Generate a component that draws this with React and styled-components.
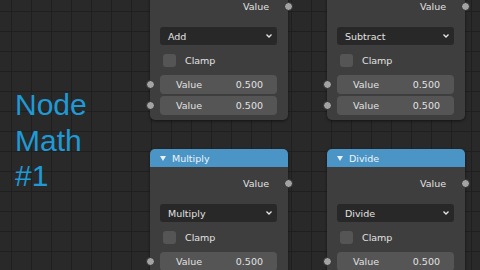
import React from "react";
import styled, { createGlobalStyle } from "styled-components";

const GlobalStyle = createGlobalStyle`
  html, body {
    margin: 0;
    padding: 0;
    background: #292929;
  }
  #root {
    width: 480px;
    height: 270px;
  }
`;

// node editor canvas with its grid
const Canvas = styled.div`
  position: relative;
  width: 480px;
  height: 270px;
  overflow: hidden;
  background-color: #292929;
  background-image:
    linear-gradient(to right, #1f1f1f 1px, transparent 1px),
    linear-gradient(to bottom, #1f1f1f 1px, transparent 1px);
  background-size: 20px 20px;
  background-position: 11px 11px;
  font-family: "DejaVu Sans", "Liberation Sans", sans-serif;
`;

const Title = styled.div`
  position: absolute;
  left: 15px;
  top: 87px;
  font-family: "Liberation Sans", Arial, sans-serif;
  font-size: 30px;
  line-height: 35.5px;
  color: #1f9ad6;
`;

const NodeBox = styled.div`
  position: absolute;
  left: ${(p) => p.$x}px;
  top: ${(p) => p.$y}px;
  width: 138px;
  background: #3e3e3e;
  border-radius: 5px;
  box-shadow: 0 1px 3px rgba(0, 0, 0, 0.55);
  color: #e2e2e2;
  font-size: 9.5px;
`;

const Header = styled.div`
  height: 18px;
  display: flex;
  align-items: center;
  gap: 6px;
  padding-left: 10px;
  background: #4a94c6;
  border-radius: 5px 5px 0 0;
  color: #eef4f8;
`;

const Arrow = styled.span`
  width: 0;
  height: 0;
  border-left: 3px solid transparent;
  border-right: 3px solid transparent;
  border-top: 5px solid #e8f0f6;
  margin-top: 1px;
`;

const Body = styled.div`
  display: flex;
  flex-direction: column;
  padding: 6px 11px 5px 10px;
`;

const OutputRow = styled.div`
  position: relative;
  height: 20px;
  display: flex;
  align-items: center;
  justify-content: flex-end;
  padding-right: 8px;
`;

const Socket = styled.span`
  position: absolute;
  top: 50%;
  width: 7px;
  height: 7px;
  margin-top: -4.5px;
  border: 1px solid #2b2b2b;
  border-radius: 50%;
  background: #a3a3a3;
  ${(p) => (p.$side === "out" ? "right: -15.5px;" : "left: -14.5px;")}
`;

const Dropdown = styled.div`
  margin-top: 11px;
  height: 18px;
  display: flex;
  align-items: center;
  justify-content: space-between;
  padding: 0 4px 0 8px;
  background: #282828;
  border-radius: 3px;
`;

const ClampRow = styled.div`
  margin-top: 6px;
  height: 18px;
  display: flex;
  align-items: center;
  padding-left: 3px;
  gap: 9px;
`;

const Check = styled.span`
  width: 13px;
  height: 13px;
  border-radius: 3px;
  background: #555555;
`;

const Field = styled.div`
  position: relative;
  margin-top: ${(p) => p.$gap}px;
  height: 19px;
  display: flex;
  align-items: center;
  justify-content: space-between;
  padding: 0 14px 0 16px;
  background: #555555;
  border-radius: 4px;
`;

function Chevron() {
  return (
    <svg width="8" height="6" viewBox="0 0 8 6">
      <path d="M1.5 1.5 L4 4 L6.5 1.5" fill="none" stroke="#e6e6e6" strokeWidth="1.3" />
    </svg>
  );
}

function MathNode({ x, y, title, op }) {
  return (
    <NodeBox $x={x} $y={y}>
      <Header>
        <Arrow />
        {title}
      </Header>
      <Body>
        <OutputRow>
          Value
          <Socket $side="out" />
        </OutputRow>
        <Dropdown>
          {op}
          <Chevron />
        </Dropdown>
        <ClampRow>
          <Check />
          Clamp
        </ClampRow>
        <Field $gap={6}>
          <span>Value</span>
          <span>0.500</span>
          <Socket $side="in" />
        </Field>
        <Field $gap={2}>
          <span>Value</span>
          <span>0.500</span>
          <Socket $side="in" />
        </Field>
      </Body>
    </NodeBox>
  );
}

export default function App() {
  return (
    <>
      <GlobalStyle />
      <Canvas>
        <Title>
          Node
          <br />
          Math
          <br />
          #1
        </Title>
        <MathNode x={150} y={-28} title="Add" op="Add" />
        <MathNode x={327} y={-28} title="Subtract" op="Subtract" />
        <MathNode x={150} y={149} title="Multiply" op="Multiply" />
        <MathNode x={327} y={149} title="Divide" op="Divide" />
      </Canvas>
    </>
  );
}
